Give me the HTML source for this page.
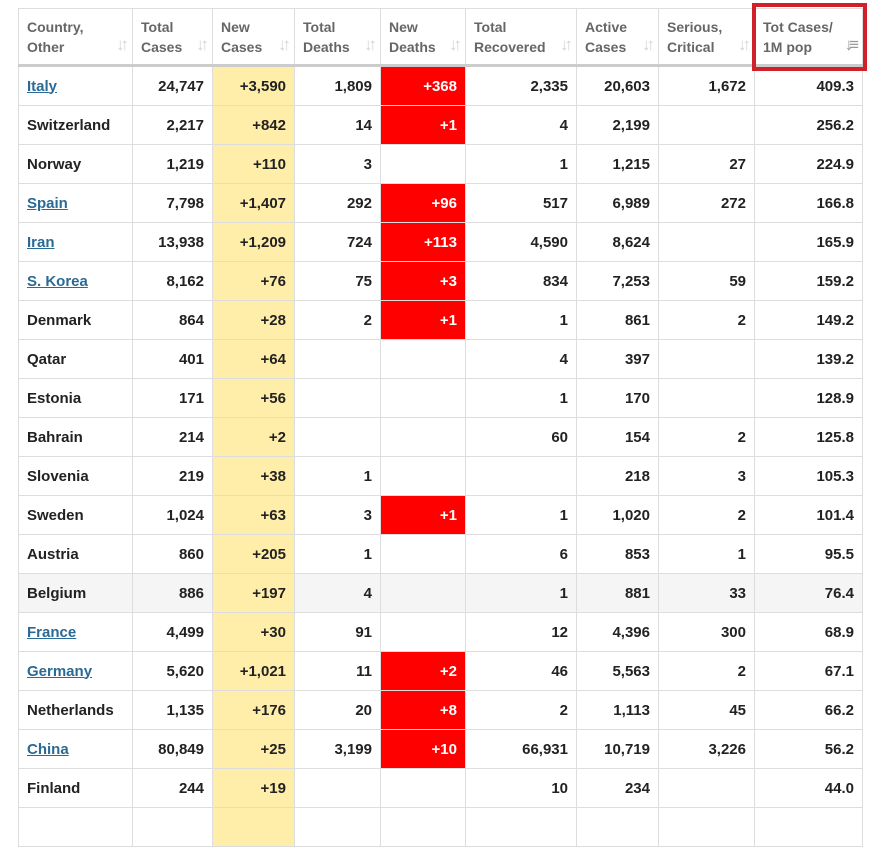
<!DOCTYPE html>
<html><head><style>
body{margin:0;background:#fff;font-family:"Liberation Sans",Arial,sans-serif;}
table{position:absolute;left:18px;top:8px;border-collapse:collapse;table-layout:fixed;}
td,th{border:1px solid #ddd;padding:0 8px;font-size:15px;font-weight:bold;color:#222;height:38px;text-align:right;white-space:nowrap;}
th{height:55px;color:#666;font-size:14px;text-align:left;vertical-align:middle;line-height:20px;position:relative;border-bottom:3px solid #ccc;}
th .s{position:absolute;right:7px;bottom:9px;color:#d4d4d4;font-size:17px;letter-spacing:-4px;font-weight:bold;}
td:first-child{text-align:left;}
td.y{background:#FFEEAA;}
td.r{background:#f00;color:#fff;}
a{color:#2a6a96;text-decoration:underline;}
tr.g td{background:#f5f5f5;} tr.g td.y{background:#FFEEAA;}
.box{position:absolute;left:752px;top:3px;width:107px;height:60px;border:4px solid #d0202a;}
</style></head><body>
<table>
<colgroup><col style="width:114px"><col style="width:80px"><col style="width:82px"><col style="width:86px"><col style="width:85px"><col style="width:111px"><col style="width:82px"><col style="width:96px"><col style="width:108px"></colgroup>
<tr><th>Country,<br>Other<span class="s">↓↑</span></th><th>Total<br>Cases<span class="s">↓↑</span></th><th>New<br>Cases<span class="s">↓↑</span></th><th>Total<br>Deaths<span class="s">↓↑</span></th><th>New<br>Deaths<span class="s">↓↑</span></th><th>Total<br>Recovered<span class="s">↓↑</span></th><th>Active<br>Cases<span class="s">↓↑</span></th><th>Serious,<br>Critical<span class="s">↓↑</span></th><th>Tot Cases/<br>1M pop<span class="s" style="color:#999">↓≡</span></th></tr>
<tr><td><a>Italy</a></td><td>24,747</td><td class="y">+3,590</td><td>1,809</td><td class="r">+368</td><td>2,335</td><td>20,603</td><td>1,672</td><td>409.3</td></tr>
<tr><td>Switzerland</td><td>2,217</td><td class="y">+842</td><td>14</td><td class="r">+1</td><td>4</td><td>2,199</td><td></td><td>256.2</td></tr>
<tr><td>Norway</td><td>1,219</td><td class="y">+110</td><td>3</td><td></td><td>1</td><td>1,215</td><td>27</td><td>224.9</td></tr>
<tr><td><a>Spain</a></td><td>7,798</td><td class="y">+1,407</td><td>292</td><td class="r">+96</td><td>517</td><td>6,989</td><td>272</td><td>166.8</td></tr>
<tr><td><a>Iran</a></td><td>13,938</td><td class="y">+1,209</td><td>724</td><td class="r">+113</td><td>4,590</td><td>8,624</td><td></td><td>165.9</td></tr>
<tr><td><a>S. Korea</a></td><td>8,162</td><td class="y">+76</td><td>75</td><td class="r">+3</td><td>834</td><td>7,253</td><td>59</td><td>159.2</td></tr>
<tr><td>Denmark</td><td>864</td><td class="y">+28</td><td>2</td><td class="r">+1</td><td>1</td><td>861</td><td>2</td><td>149.2</td></tr>
<tr><td>Qatar</td><td>401</td><td class="y">+64</td><td></td><td></td><td>4</td><td>397</td><td></td><td>139.2</td></tr>
<tr><td>Estonia</td><td>171</td><td class="y">+56</td><td></td><td></td><td>1</td><td>170</td><td></td><td>128.9</td></tr>
<tr><td>Bahrain</td><td>214</td><td class="y">+2</td><td></td><td></td><td>60</td><td>154</td><td>2</td><td>125.8</td></tr>
<tr><td>Slovenia</td><td>219</td><td class="y">+38</td><td>1</td><td></td><td></td><td>218</td><td>3</td><td>105.3</td></tr>
<tr><td>Sweden</td><td>1,024</td><td class="y">+63</td><td>3</td><td class="r">+1</td><td>1</td><td>1,020</td><td>2</td><td>101.4</td></tr>
<tr><td>Austria</td><td>860</td><td class="y">+205</td><td>1</td><td></td><td>6</td><td>853</td><td>1</td><td>95.5</td></tr>
<tr class="g"><td>Belgium</td><td>886</td><td class="y">+197</td><td>4</td><td></td><td>1</td><td>881</td><td>33</td><td>76.4</td></tr>
<tr><td><a>France</a></td><td>4,499</td><td class="y">+30</td><td>91</td><td></td><td>12</td><td>4,396</td><td>300</td><td>68.9</td></tr>
<tr><td><a>Germany</a></td><td>5,620</td><td class="y">+1,021</td><td>11</td><td class="r">+2</td><td>46</td><td>5,563</td><td>2</td><td>67.1</td></tr>
<tr><td>Netherlands</td><td>1,135</td><td class="y">+176</td><td>20</td><td class="r">+8</td><td>2</td><td>1,113</td><td>45</td><td>66.2</td></tr>
<tr><td><a>China</a></td><td>80,849</td><td class="y">+25</td><td>3,199</td><td class="r">+10</td><td>66,931</td><td>10,719</td><td>3,226</td><td>56.2</td></tr>
<tr><td>Finland</td><td>244</td><td class="y">+19</td><td></td><td></td><td>10</td><td>234</td><td></td><td>44.0</td></tr>
<tr><td></td><td></td><td class="y"></td><td></td><td></td><td></td><td></td><td></td><td></td></tr>
</table>
<div class="box"></div>
</body></html>
